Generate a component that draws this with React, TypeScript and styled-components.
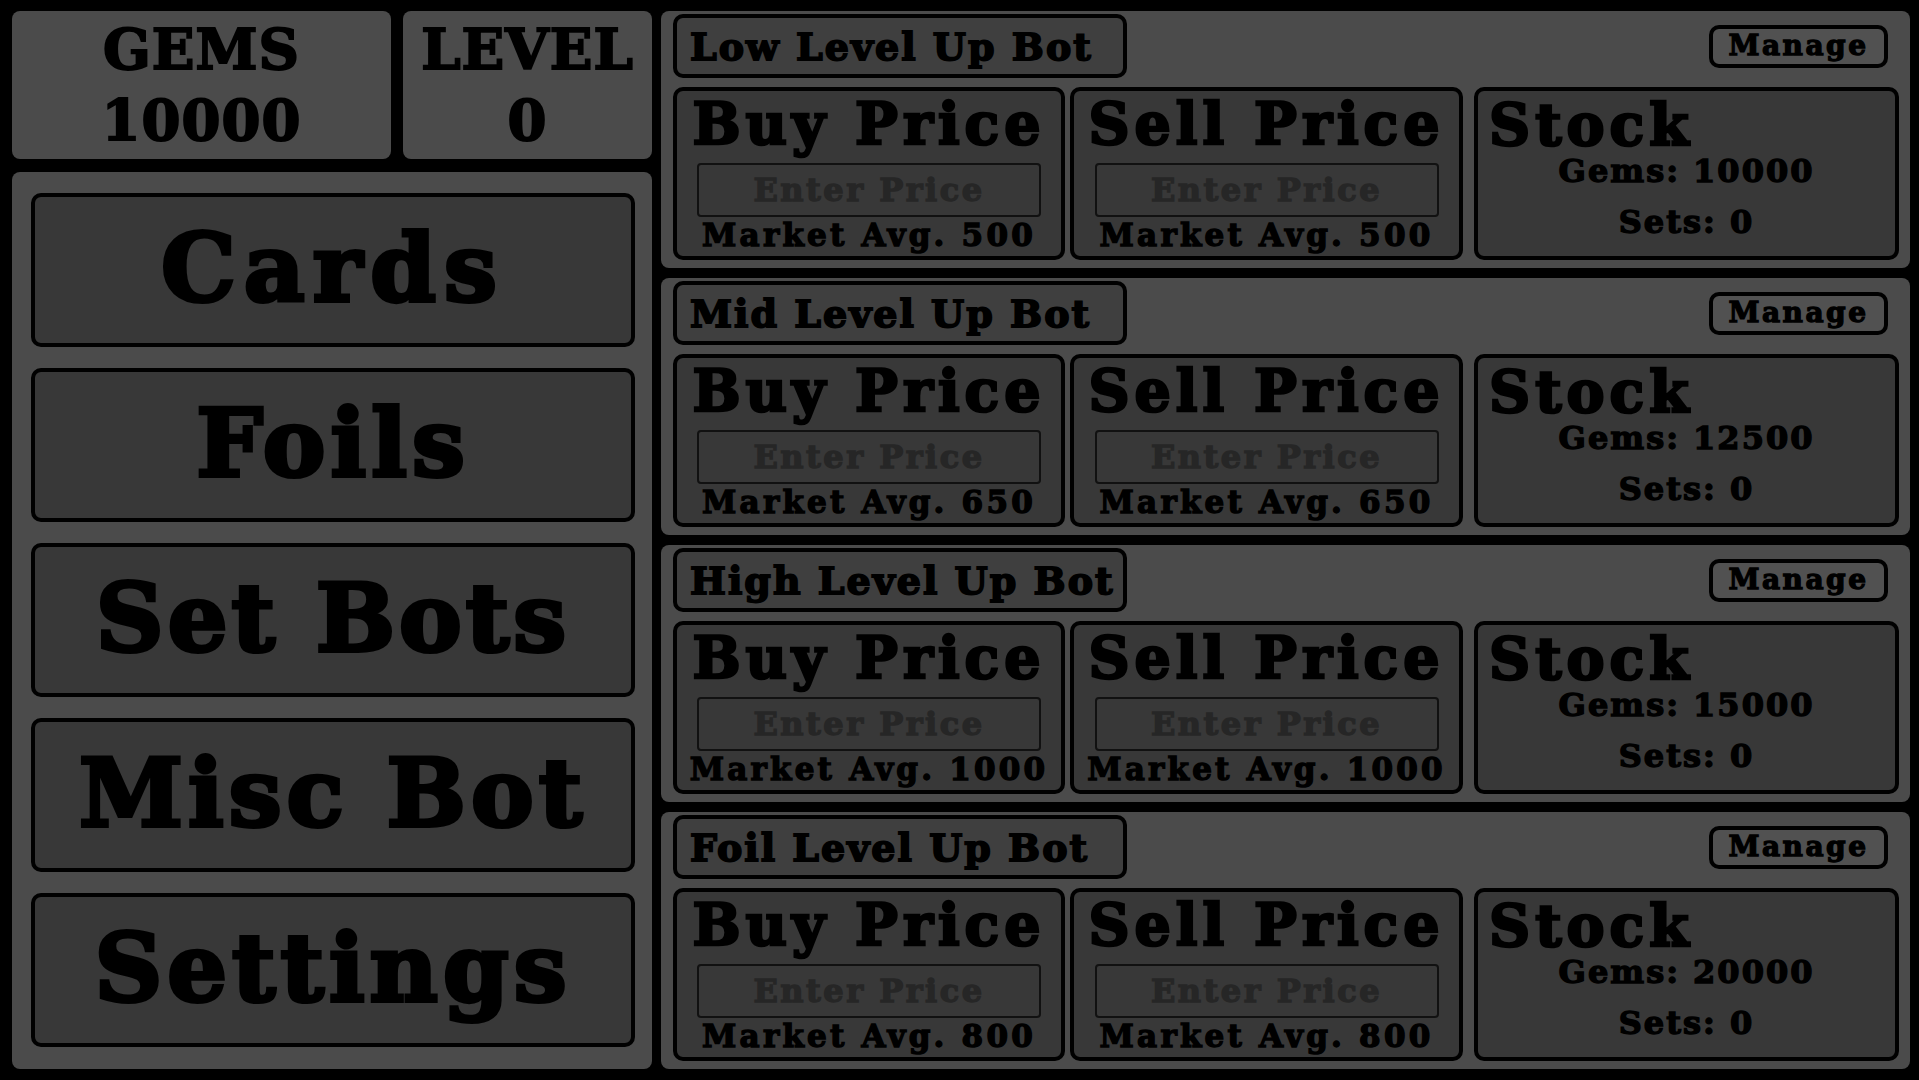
import React from 'react'
import styled, { createGlobalStyle } from 'styled-components'

const GlobalStyle = createGlobalStyle`
  html, body {
    margin: 0;
    padding: 0;
    background: #000;
  }
  body {
    font-family: 'DejaVu Serif', 'Liberation Serif', serif;
    font-weight: bold;
    color: #000;
  }
  * {
    box-sizing: border-box;
  }
`

const Page = styled.div`
  display: flex;
  gap: 9px;
  width: 1919px;
  height: 1080px;
  padding: 11px 9px 11px 12px;
  background: #000;
`

const LeftColumn = styled.div`
  display: flex;
  flex-direction: column;
  gap: 13px;
  width: 640px;
`

const StatsRow = styled.div`
  display: grid;
  grid-template-columns: 379px 249px;
  gap: 12px;
  height: 148px;
`

const StatPanel = styled.div`
  display: flex;
  flex-direction: column;
  align-items: center;
  justify-content: center;
  background: #4b4b4b;
  border-radius: 8px;
`

const StatText = styled.div`
  font-size: 56px;
  line-height: 71px;
  letter-spacing: 1px;
  -webkit-text-stroke-width: 2px;
`

const NavPanel = styled.nav`
  flex: 1;
  display: flex;
  flex-direction: column;
  gap: 21px;
  padding: 21px 17px 22px 19px;
  background: #4b4b4b;
  border-radius: 8px;
`

const NavButton = styled.button<{ $spacing: number }>`
  flex: 1;
  display: flex;
  align-items: center;
  justify-content: center;
  border: 4px solid #000;
  border-radius: 10px;
  background: #383838;
  color: #000;
  font-family: inherit;
  font-weight: bold;
  font-size: 94px;
  letter-spacing: ${({ $spacing }) => $spacing}px;
  -webkit-text-stroke-width: 4px;
  padding: 0 0 4px;
  cursor: pointer;
`

const RightColumn = styled.div`
  flex: 1;
  display: flex;
  flex-direction: column;
  gap: 10px;
`

const BotSection = styled.section`
  flex: 1;
  display: flex;
  flex-direction: column;
  gap: 9px;
  padding: 3px 11px 8px 12px;
  background: #4b4b4b;
  border-radius: 8px;
`

const SectionHeader = styled.div`
  display: flex;
  align-items: center;
  justify-content: space-between;
`

const TitleBox = styled.div`
  display: flex;
  align-items: center;
  width: 454px;
  height: 64px;
  padding: 0 0 0 13px;
  border: 4px solid #000;
  border-radius: 10px;
  background: #3f3f3f;
  font-size: 38px;
  letter-spacing: 2px;
  -webkit-text-stroke-width: 1.8px;
  white-space: nowrap;
`

const ManageButton = styled.button`
  width: 179px;
  height: 43px;
  margin: 0 11px 0 0;
  padding: 0 0 3px;
  border: 4px solid #000;
  border-radius: 10px;
  background: #515151;
  color: #000;
  font-family: inherit;
  font-weight: bold;
  font-size: 28px;
  letter-spacing: 2.5px;
  -webkit-text-stroke-width: 1.3px;
  cursor: pointer;
`

const CardRow = styled.div`
  display: grid;
  grid-template-columns: 392px 393px 1fr;
  column-gap: 5px;
  height: 173px;
`

const Card = styled.div<{ $gapBefore?: number }>`
  display: flex;
  flex-direction: column;
  border: 4px solid #000;
  border-radius: 10px;
  background: #383838;
  margin-left: ${({ $gapBefore }) => $gapBefore || 0}px;
  overflow: hidden;
`

const PriceCard = styled(Card)`
  align-items: center;
  padding: 4px 14px 0;
`

const CardTitle = styled.div`
  font-size: 57px;
  line-height: 58px;
  letter-spacing: 5px;
  -webkit-text-stroke-width: 2.6px;
  white-space: nowrap;
`

const PriceInput = styled.input`
  width: 344px;
  height: 54px;
  margin-top: 10px;
  border: 2px solid #111;
  border-radius: 4px;
  background: #383838;
  color: #000;
  font-family: inherit;
  font-weight: bold;
  font-size: 32px;
  letter-spacing: 2.5px;
  text-align: center;
  outline: none;

  &::placeholder {
    color: #262626;
    -webkit-text-stroke: 1.4px #262626;
  }
`

const MarketAvg = styled.div`
  margin-top: 2px;
  font-size: 31px;
  line-height: 32px;
  letter-spacing: 3.2px;
  -webkit-text-stroke-width: 1.4px;
  white-space: nowrap;
`

const StockCard = styled(Card)`
  padding: 5px 11px 0;
`

const StockLine = styled.div<{ $top: number }>`
  margin-top: ${({ $top }) => $top}px;
  font-size: 32px;
  line-height: 33px;
  letter-spacing: 2px;
  -webkit-text-stroke-width: 1.4px;
  text-align: center;
`

type Bot = {
  name: string
  avg: number
  gems: number
  sets: number
}

const bots: Bot[] = [
  { name: 'Low Level Up Bot', avg: 500, gems: 10000, sets: 0 },
  { name: 'Mid Level Up Bot', avg: 650, gems: 12500, sets: 0 },
  { name: 'High Level Up Bot', avg: 1000, gems: 15000, sets: 0 },
  { name: 'Foil Level Up Bot', avg: 800, gems: 20000, sets: 0 },
]

const navItems = [
  { label: 'Cards', spacing: 8 },
  { label: 'Foils', spacing: 5 },
  { label: 'Set Bots', spacing: 4 },
  { label: 'Misc Bot', spacing: 5 },
  { label: 'Settings', spacing: 5 },
]

const PriceBox = ({ title, avg }: { title: string; avg: number }) => (
  <PriceCard>
    <CardTitle>{title}</CardTitle>
    <PriceInput placeholder="Enter Price" />
    <MarketAvg>Market Avg. {avg}</MarketAvg>
  </PriceCard>
)

const BotPanel = ({ bot }: { bot: Bot }) => (
  <BotSection>
    <SectionHeader>
      <TitleBox>{bot.name}</TitleBox>
      <ManageButton>Manage</ManageButton>
    </SectionHeader>
    <CardRow>
      <PriceBox title="Buy Price" avg={bot.avg} />
      <PriceBox title="Sell Price" avg={bot.avg} />
      <StockCard $gapBefore={6}>
        <CardTitle>Stock</CardTitle>
        <StockLine $top={1}>Gems: {bot.gems}</StockLine>
        <StockLine $top={18}>Sets: {bot.sets}</StockLine>
      </StockCard>
    </CardRow>
  </BotSection>
)

export default function App() {
  return (
    <>
      <GlobalStyle />
      <Page>
        <LeftColumn>
          <StatsRow>
            <StatPanel>
              <StatText>GEMS</StatText>
              <StatText>10000</StatText>
            </StatPanel>
            <StatPanel>
              <StatText>LEVEL</StatText>
              <StatText>0</StatText>
            </StatPanel>
          </StatsRow>
          <NavPanel>
            {navItems.map((item) => (
              <NavButton key={item.label} $spacing={item.spacing}>
                {item.label}
              </NavButton>
            ))}
          </NavPanel>
        </LeftColumn>
        <RightColumn>
          {bots.map((bot) => (
            <BotPanel key={bot.name} bot={bot} />
          ))}
        </RightColumn>
      </Page>
    </>
  )
}
